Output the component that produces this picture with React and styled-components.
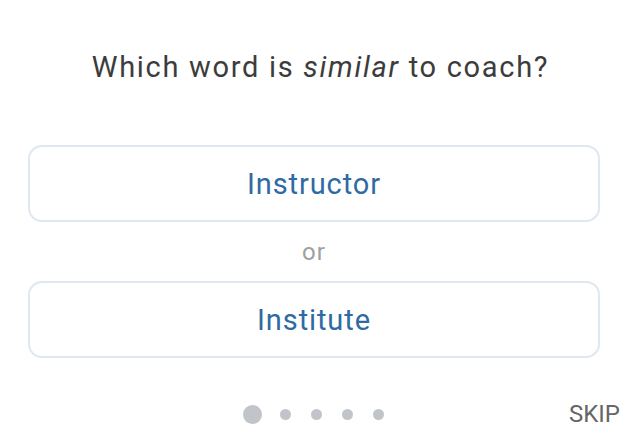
import React from 'react'
import styled, { createGlobalStyle } from 'styled-components'

const GlobalStyle = createGlobalStyle`
  body {
    margin: 0;
    background: #ffffff;
    font-family: Roboto, "Liberation Sans", Arial, sans-serif;
  }
`

const Page = styled.div`
  display: flex;
  flex-direction: column;
  width: 640px;
  height: 433px;
  box-sizing: border-box;
  padding: 50px 40px 0 28px;
  overflow: hidden;
`

const Question = styled.h1`
  margin: 0 0 0 13px;
  font-size: 29px;
  line-height: 34px;
  font-weight: 400;
  letter-spacing: 1.7px;
  color: #3c3c3c;
  text-align: center;

  em {
    font-style: italic;
  }
`

const Options = styled.div`
  display: flex;
  flex-direction: column;
  margin-top: 61px;
`

const Option = styled.button`
  display: flex;
  align-items: center;
  justify-content: center;
  height: 77px;
  border: 2px solid #dfe7f0;
  border-radius: 14px;
  background: #ffffff;
  font-family: inherit;
  font-size: 29px;
  line-height: 34px;
  letter-spacing: 0.9px;
  color: #2f6aa2;
  cursor: pointer;
`

const Or = styled.div`
  display: flex;
  align-items: center;
  justify-content: center;
  height: 59px;
  font-size: 24px;
  letter-spacing: 1px;
  color: #a0a0a0;
`

const Footer = styled.div`
  display: grid;
  grid-template-columns: 1fr auto 1fr;
  align-items: center;
  height: 20px;
  margin-top: 46px;
`

const Dots = styled.div`
  grid-column: 2;
  display: flex;
  align-items: center;
  gap: 20px;
  margin-left: -2px;
`

const Dot = styled.span`
  display: block;
  width: ${(p) => (p.$active ? 19 : 11)}px;
  height: ${(p) => (p.$active ? 19 : 11)}px;
  margin-right: ${(p) => (p.$active ? -2 : 0)}px;
  border-radius: 50%;
  background: #c1c4c9;
`

const Skip = styled.button`
  grid-column: 3;
  justify-self: end;
  margin-right: -20px;
  padding: 0;
  border: none;
  background: none;
  font-family: inherit;
  font-size: 24px;
  line-height: 20px;
  color: #666666;
  cursor: pointer;
`

const App = () => {
  return (
    <Page>
      <GlobalStyle />
      <Question>
        Which word is <em>similar</em> to coach?
      </Question>
      <Options>
        <Option>Instructor</Option>
        <Or>or</Or>
        <Option>Institute</Option>
      </Options>
      <Footer>
        <Dots>
          {[0, 1, 2, 3, 4].map((i) => (
            <Dot key={i} $active={i === 0} />
          ))}
        </Dots>
        <Skip>SKIP</Skip>
      </Footer>
    </Page>
  )
}

export default App
